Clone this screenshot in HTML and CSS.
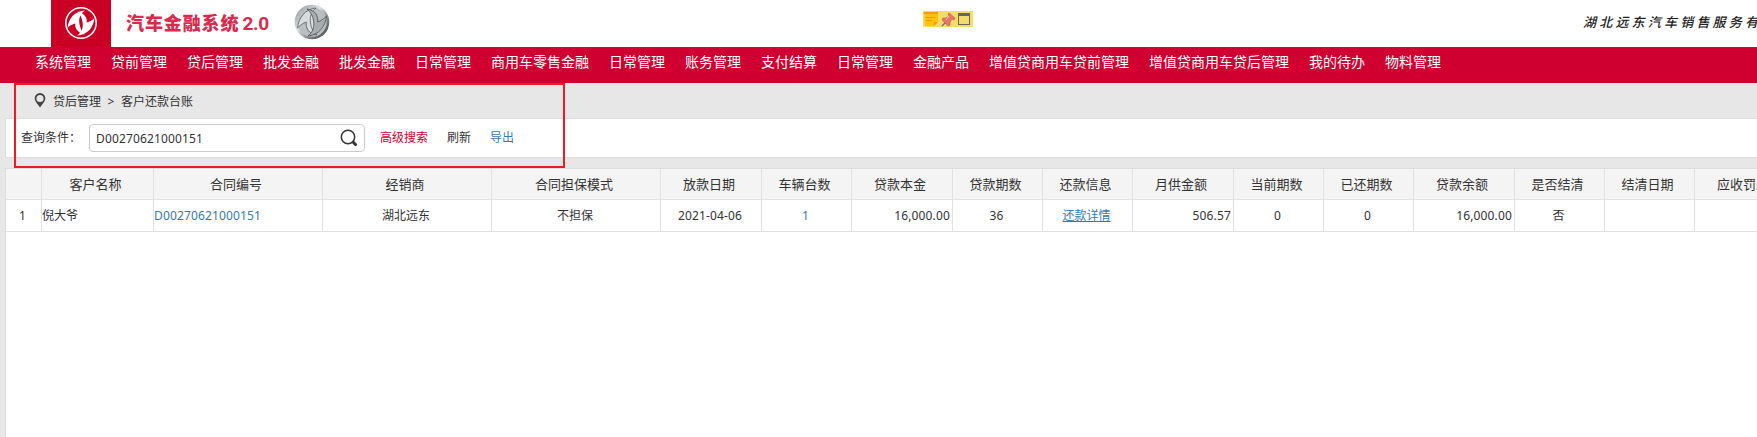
FILE: index.html
```html
<!DOCTYPE html>
<html lang="zh-CN">
<head>
<meta charset="utf-8">
<title>汽车金融系统 2.0</title>
<link rel="stylesheet" href="styles.css">
</head>
<body>
<header class="header">
  <div class="brand">
    <svg class="brand-mark" viewBox="0 0 36 36">
      <circle cx="18" cy="18" r="15.2" fill="none" stroke="#fff" stroke-width="1.5"/>
      <path id="wing" fill="#fff" d="M4.500 23C5.500 14 11 6 22 5.500c-5 3.500-6.500 8-5.500 13.500.7 4 2 7 5 10.500-4-.8-7-3-8.500-6-.8-1.600-.9-3-.7-5-3 .8-5.500 2-7.800 4.500Z"/>
      <use href="#wing" transform="rotate(180 18 18)"/>
    </svg>
  </div>
  <h1 class="title">汽车金融系统<span class="version">2.0</span></h1>
  <svg class="silver" viewBox="0 0 36 36">
    <defs>
      <linearGradient id="metal" x1="0" y1="0" x2="1" y2="1">
        <stop offset="0" stop-color="#8d9396"/><stop offset=".4" stop-color="#dfe2e3"/>
        <stop offset=".65" stop-color="#8a9093"/><stop offset="1" stop-color="#3c4144"/>
      </linearGradient>
      <linearGradient id="core" x1="0" y1="0" x2="1" y2="0">
        <stop offset="0" stop-color="#858b8e"/><stop offset=".5" stop-color="#e4e7e8"/><stop offset="1" stop-color="#999fa2"/>
      </linearGradient>
    </defs>
    <circle cx="18" cy="18" r="16" fill="#b9bec0" stroke="url(#metal)" stroke-width="2.600"/>
    <ellipse cx="18" cy="18" rx="6" ry="13" fill="url(#core)"/>
    <path fill="#d9dcdd" stroke="#585e61" stroke-width=".8" d="M3.500 24C4.500 14 11 5 22 4c-5 4-6.500 9-5.500 15 .7 5 2.500 9 6.500 12-5-.8-8.500-3-10-7-.8-2-.9-3.500-.7-6-3 1-6 3-8.800 6Z"/>
    <path fill="#a8adaf" stroke="#4b5154" stroke-width=".8" d="M32.500 12C31.500 22 25 31 14 32c5-4 6.500-9 5.500-15-.7-5-2.500-9-6.500-12 5 .8 8.500 3 10 7 .8 2 .9 3.500.7 6 3-1 6-3 8.800-6Z"/>
  </svg>
  <svg class="tools" viewBox="0 0 50 16">
    <path fill="#f3dc67" d="M0 0h50v16H0z"/>
    <path fill="#fcc30b" d="M1 1h14v10l-4 4H2z"/>
    <path fill="#f39a12" d="M1 1h14v2H1zM11 15v-4h4z"/>
    <path stroke="#e59a10" d="M3 6.500h9M3 9.500h6"/>
    <path stroke="#777" stroke-width="1.500" d="M19 15l4-4"/>
    <path fill="#e7776b" stroke="#bd5b4d" stroke-width=".6" d="M26 2l6 5-1 2-2-1-2 3v3l-2 1-6-6 1-2h3l3-2-1-2Z"/>
    <path stroke="#fac2b8" d="M26 5l-3 4"/>
    <path fill="#666" d="M35 2h12v12H35zm1 3v8h10V5z" fill-rule="evenodd"/>
  </svg>
  <div class="company">湖北远东汽车销售服务有</div>
</header>
<nav class="nav">
  <a>系统管理</a><a>贷前管理</a><a>贷后管理</a><a>批发金融</a><a>批发金融</a><a>日常管理</a><a>商用车零售金融</a><a>日常管理</a><a>账务管理</a><a>支付结算</a><a>日常管理</a><a>金融产品</a><a>增值贷商用车贷前管理</a><a>增值贷商用车贷后管理</a><a>我的待办</a><a>物料管理</a>
</nav>
<main class="main">
  <div class="crumbs">
    <svg class="pin" viewBox="0 0 12 16"><path fill="#444" fill-rule="evenodd" d="M6 0a5.700 5.700 0 0 1 5.700 5.700C11.700 9 8.500 12 6 15.500 3.500 12 .3 9 .3 5.700A5.700 5.700 0 0 1 6 0Zm0 2a3.800 3.800 0 1 0 0 7.600A3.800 3.800 0 0 0 6 2Z"/></svg>
    <span>贷后管理</span><span class="sep">&gt;</span><span>客户还款台账</span>
  </div>
  <div class="search">
    <span class="label">查询条件：</span>
    <div class="field"><span class="num">D00270621000151</span>
      <svg class="lens" viewBox="0 0 18 18"><circle cx="8" cy="8" r="6.700" fill="none" stroke="#333" stroke-width="1.500"/><path stroke="#333" stroke-width="3" stroke-linecap="round" d="M13.300 13.300l2.200 2.200"/></svg>
    </div>
    <a class="advanced">高级搜索</a><a class="refresh">刷新</a><a class="export">导出</a>
  </div>
  <div class="grid">
    <div class="row head">
      <div></div><div>客户名称</div><div>合同编号</div><div>经销商</div><div>合同担保模式</div><div>放款日期</div><div>车辆台数</div><div>贷款本金</div><div>贷款期数</div><div>还款信息</div><div>月供金额</div><div>当前期数</div><div>已还期数</div><div>贷款余额</div><div>是否结清</div><div>结清日期</div><div>应收罚息</div>
    </div>
    <div class="row">
      <div class="num">1</div><div class="left">倪大爷</div><div class="left num link">D00270621000151</div><div>湖北远东</div><div>不担保</div><div class="num">2021-04-06</div><div class="num link">1</div><div class="right num">16,000.00</div><div class="num">36</div><div><a class="detail">还款详情</a></div><div class="right num">506.57</div><div class="num">0</div><div class="num">0</div><div class="right num">16,000.00</div><div>否</div><div></div><div></div>
    </div>
  </div>
</main>
<div class="highlight"></div>
</body>
</html>
```
FILE: styles.css
```css
* { box-sizing: border-box; }
body {
  margin: 0;
  height: 437px;
  overflow: hidden;
  display: flex;
  flex-direction: column;
  background: #fff;
  color: #333;
  font: 12px/16px "Noto Sans CJK SC", sans-serif;
}
svg { display: block; flex: none; }
.header {
  flex: none;
  display: flex;
  align-items: flex-start;
  height: 47px;
  padding-left: 51px;
  overflow: hidden;
  white-space: nowrap;
}
.brand { flex: none; width: 60px; height: 47px; padding: 5px 0 0 12px; background: #c90024; }
.brand-mark { width: 36px; height: 36px; }
.title {
  flex: none;
  width: 168px;
  margin: 9px 0 0 15px;
  color: #d92b4e;
  font-size: 18px;
  font-weight: 900;
  line-height: 26px;
  letter-spacing: 0.900px;
}
.version { margin-left: 3px; font: bold 19px/26px Roboto, sans-serif; letter-spacing: -0.300px; }
.silver { width: 36px; height: 36px; margin-top: 4px; }
.tools { width: 50px; height: 16px; margin: 11px 0 0 593px; }
.company {
  flex: none;
  margin: 12px 0 0 610px;
  color: #222;
  font: italic 500 13px/20px "Noto Sans CJK SC", sans-serif;
  letter-spacing: 3.200px;
}
.nav {
  flex: none;
  display: flex;
  gap: 20px;
  height: 36px;
  padding-left: 35px;
  background: #cf0030;
  color: #fff;
  font-size: 14px;
  line-height: 29px;
  white-space: nowrap;
}
.main { flex: 1; display: flex; flex-direction: column; padding-left: 5px; background: #e7e7e7; min-height: 0; }
.crumbs { display: flex; flex: none; height: 35px; padding: 10px 0 0 29px; color: #333; }
.pin { width: 12px; height: 15px; margin: 0 7px 0 0; }
.sep { width: 20px; padding-top: 1px; text-align: center; font-family: "Noto Sans", sans-serif; }
.search {
  flex: none;
  display: flex;
  height: 40px;
  padding: 5px 0 0 15px;
  border: 1px solid #ddd;
  border-right: 0;
  background: #fff;
}
.label { width: 68px; line-height: 25px; }
.field {
  display: flex;
  justify-content: space-between;
  width: 276px;
  height: 28px;
  padding: 0 6px 0 6px;
  border: 1px solid #ccc;
  border-radius: 4px;
  line-height: 28px;
}
.lens { width: 18px; height: 18px; margin-top: 4px; }
.advanced, .refresh, .export { line-height: 25px; }
.advanced { margin-left: 15px; color: #cf0030; }
.refresh { margin-left: 19px; }
.export { margin-left: 19px; color: #337ab7; }
.num { font-family: "Noto Sans", sans-serif; font-size: 12px; letter-spacing: 0.150px; }
.grid { flex: 1; margin-top: 10px; border: 1px solid #ddd; border-width: 1px 0 0 1px; background: #fff; overflow: hidden; }
.row {
  display: grid;
  grid-template-columns: 36px 112px 169px 169px 169px 101px 90px 101px 90px 90px 101px 90px 90px 101px 90px 90px 101px;
  width: 1790px;
  height: 32px;
  border-bottom: 1px solid #e2e2e2;
  line-height: 30px;
  text-align: center;
}
.row > div { padding-right: 2px; border-right: 1px solid #e2e2e2; white-space: nowrap; }
.row.head { height: 31px; background: #f4f4f4; font-size: 13px; line-height: 29px; }
.row.head > div { padding-right: 4px; }
.row > .num { line-height: 31px; }
.row > .left { text-align: left; }
.row > .right { text-align: right; }
.link, .detail { color: #337ab7; }
.detail { text-decoration: underline; }
.highlight {
  position: absolute;
  left: 14px;
  top: 83px;
  width: 551px;
  height: 85px;
  border: 2px solid #ed1c24;
}
```
